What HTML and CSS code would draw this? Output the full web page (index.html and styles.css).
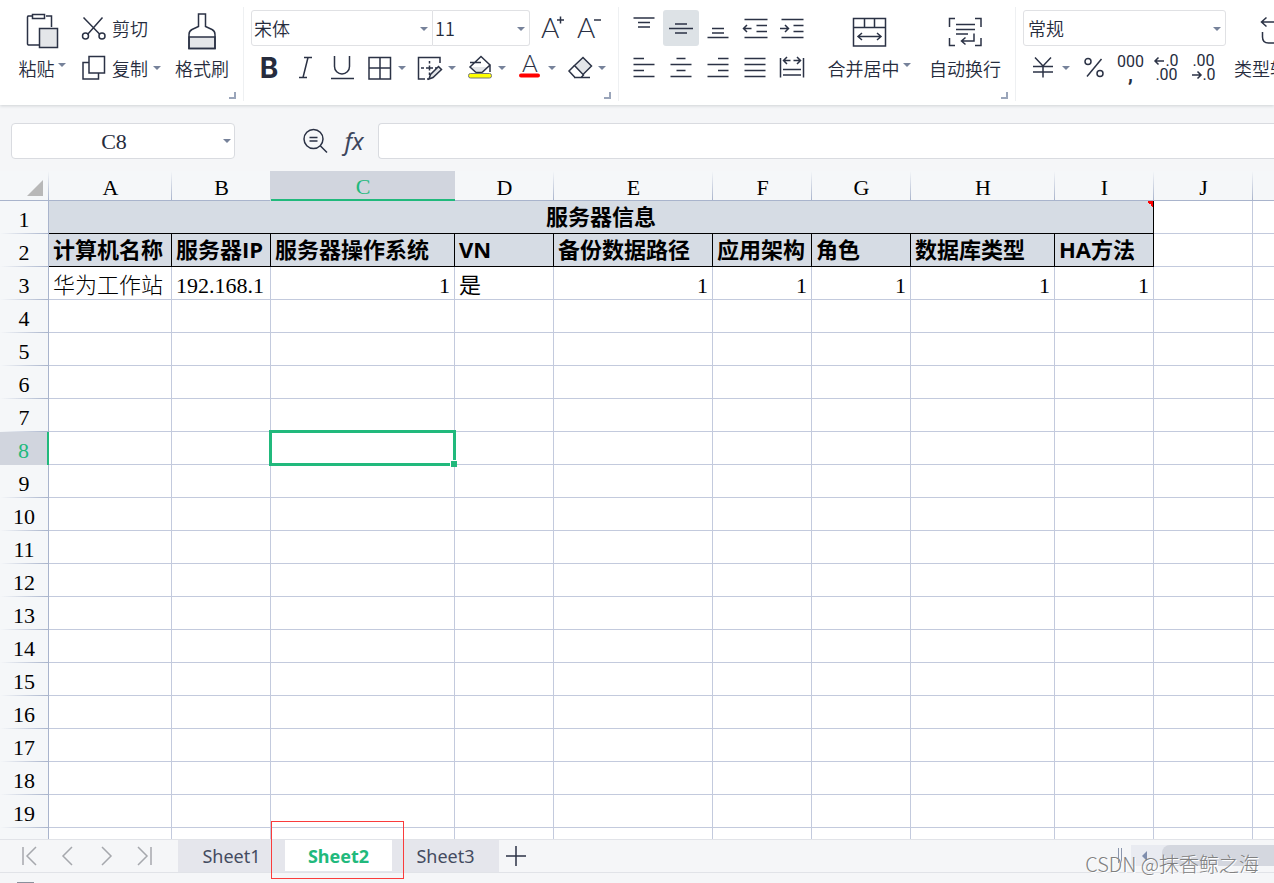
FILE: index.html
```html
<!DOCTYPE html>
<html lang="zh-CN">
<head>
<meta charset="utf-8">
<title>Sheet2</title>
<link rel="stylesheet" href="styles.css">
</head>
<body>
<div class="app">
<header class="ribbon">
  <section class="group clipboard">
    <button class="big paste">
      <svg class="big-icon" width="36" height="38" viewBox="0 0 36 38"><path d="M8 4H4.500a1.500 1.500 0 0 0-1 1V32a1.500 1.500 0 0 0 1 1H15M22 4h5.500V15M8.500 2.500h12v4h-12zM8 4H3.500"/><path class="shade" d="M15.500 16.500h18v19h-18z"/></svg>
      <span class="caption">粘贴<i class="caret raised"></i></span>
    </button>
    <div class="lines">
      <button class="line">
        <svg width="26" height="26" viewBox="0 0 26 26"><path d="M2.500 2.500 19 19.500M21.500 2.500 6.500 19.500"/><circle cx="4.500" cy="21" r="3"/><circle cx="21" cy="21" r="3"/></svg>剪切
      </button>
      <button class="line">
        <svg width="26" height="26" viewBox="0 0 26 26"><path d="M7.500 7.500H2v16.500h15.500v-6M8 1.500h15.500v16.500H8z"/></svg>复制<i class="caret"></i>
      </button>
    </div>
    <button class="big brush">
      <svg class="big-icon" width="32" height="38" viewBox="0 0 32 38"><path class="shade" d="M3 25h26v11.500H3z"/><path d="M12.500 2h7v12.500l6.500 3q3 1.500 3 5v14H3v-14q0-3.500 3-5l6.500-3z"/></svg>
      <span class="caption">格式刷</span>
    </button>
    <i class="launcher"></i>
  </section>

  <section class="group font">
    <div class="row">
      <label class="combo family"><select aria-label="字体"><option>宋体</option></select></label>
      <label class="combo size"><select aria-label="字号"><option>11</option></select></label>
      <button class="tool resize" aria-label="增大字号"><svg width="26" height="28" viewBox="0 0 26 28"><text class="letter" x="1" y="24">A</text><path d="M17 6h7M20.500 2.500v7"/></svg></button>
      <button class="tool" aria-label="减小字号"><svg width="26" height="28" viewBox="0 0 26 28"><text class="letter" x="1" y="24">A</text><path d="M18 6h7"/></svg></button>
    </div>
    <div class="row">
      <button class="tool bold" aria-label="加粗">B</button>
      <button class="tool" aria-label="倾斜"><svg width="26" height="26" viewBox="0 0 26 26"><path d="M12 2.500h8M7 22.500h8M16 2.500 11 22.500"/></svg></button>
      <button class="tool" aria-label="下划线"><svg width="26" height="26" viewBox="0 0 26 26"><path d="M6.500 1v10.500a7.500 7.500 0 0 0 15 0V1M3 23.500h23"/></svg></button>
      <button class="split" aria-label="边框"><svg width="26" height="26" viewBox="0 0 26 26"><path d="M2 2.500h21.500v21.500H2zM13 2v22M2 13h22"/></svg><i class="caret"></i></button>
      <button class="split" aria-label="绘制边框"><svg width="26" height="26" viewBox="0 0 26 26"><path d="M8 24H1.500V2.500h21.500V8M10 24h2"/><path d="M4 13h3m2 0h7m2 0h2M12.500 6v2.500m0 2v5m0 2V20"/><path class="shade" d="m12 24 1.500-4.500L21.500 11.500l3 3-8.500 8z"/></svg><i class="caret"></i></button>
      <button class="split" aria-label="填充颜色"><svg width="26" height="26" viewBox="0 0 26 26"><path class="shade-only" d="M4 12h18l-6 6H9z"/><path d="m9 17.500-6-5.500L14 1.500l9 8.500-8 7.500M3 7.500h11M23 9.500V17M9 17.500h6"/><rect class="yellow" x="1.500" y="18.500" width="23" height="4.500" rx="2"/></svg><i class="caret"></i></button>
      <button class="split" aria-label="字体颜色"><svg width="26" height="26" viewBox="0 0 26 26"><text class="letter small" x="5" y="17">A</text><rect class="red" x="2" y="18.500" width="21" height="4" rx="2"/></svg><i class="caret"></i></button>
      <button class="split" aria-label="清除"><svg width="26" height="26" viewBox="0 0 26 26"><path class="shade" d="m7.500 10.500 8.500-8 8.500 8.500-8.500 8.500z"/><path d="M7.500 10.500 2 16l6 6.500h6l3-3M7 22.500h16"/></svg><i class="caret"></i></button>
    </div>
    <i class="launcher"></i>
  </section>

  <section class="group align">
    <div class="lines">
      <div class="row tight">
        <button class="tool" aria-label="顶端对齐"><svg width="26" height="26" viewBox="0 0 26 26"><path d="M2.500 3h21M7 7.500h12M7 12h12"/></svg></button>
        <button class="tool active" aria-label="垂直居中" aria-pressed="true"><svg width="26" height="26" viewBox="0 0 26 26"><path d="M1 13.500h24M7 9h12M7 18h12"/></svg></button>
        <button class="tool" aria-label="底端对齐"><svg width="26" height="26" viewBox="0 0 26 26"><path d="M7 13.500h12M7 18h12M2.500 22.500h21"/></svg></button>
        <button class="tool" aria-label="减少缩进"><svg width="26" height="26" viewBox="0 0 26 26"><path d="M2.500 4.500h23M14.500 10.500h10.500M14.500 16.500h10.500M2.500 22.500h23M1 13.500h8.500M5 10l-3.500 3.500L5 17"/></svg></button>
        <button class="tool" aria-label="增加缩进"><svg width="26" height="26" viewBox="0 0 26 26"><path d="M2.500 4.500h22M14.500 10.500h10M14.500 16.500h10M2.500 22.500h22M1 13.500h8.500M6 10l3.500 3.500L6 17"/></svg></button>
      </div>
      <div class="row tight">
        <button class="tool" aria-label="左对齐"><svg width="26" height="26" viewBox="0 0 26 26"><path d="M2.500 3.500h10.500M2.500 9.500h21M2.500 15.500h10.500M2.500 21.500h21"/></svg></button>
        <button class="tool" aria-label="水平居中"><svg width="26" height="26" viewBox="0 0 26 26"><path d="M8.500 3.500h9M2.500 9.500h21M8.500 15.500h9M2.500 21.500h21"/></svg></button>
        <button class="tool" aria-label="右对齐"><svg width="26" height="26" viewBox="0 0 26 26"><path d="M13 3.500h10.500M2.500 9.500h21M13 15.500h10.500M2.500 21.500h21"/></svg></button>
        <button class="tool" aria-label="两端对齐"><svg width="26" height="26" viewBox="0 0 26 26"><path d="M2.500 3.500h21M2.500 9.500h21M2.500 15.500h21M2.500 21.500h21"/></svg></button>
        <button class="tool" aria-label="分散对齐"><svg width="26" height="26" viewBox="0 0 26 26"><path d="M1.500 3v19.500M24.500 3v19.500M4 14.500h18M4 20h18M4.500 5.500h7M8 2 4.500 5.500 8 9M14.500 5.500h7M18 2l3.500 3.500L18 9"/></svg></button>
      </div>
    </div>
    <button class="big merge">
      <svg class="big-icon" width="36" height="36" viewBox="0 0 36 36"><path d="M2.500 6.500h32V34h-32zM2.500 15.500h32M13.500 6.500v9M23.500 6.500v9M7 24.500h23M11 21l-4 3.500 4 3.500M26 21l4 3.500-4 3.500"/></svg>
      <span class="caption">合并居中<i class="caret raised"></i></span>
    </button>
    <button class="big wrap">
      <svg class="big-icon" width="36" height="36" viewBox="0 0 36 36"><path d="M8 6.500H2.500V15M28 6.500h6V15M2.500 26v7.500H8M34 26v7.500h-6M9 12.500h19M9 17.500h19M9 22h12M27 21.500V29H14.500M18.500 25.500 14.500 29l4 3.500"/></svg>
      <span class="caption">自动换行</span>
    </button>
    <i class="launcher"></i>
  </section>

  <section class="group number">
    <div class="lines">
      <label class="combo format"><select aria-label="数字格式"><option>常规</option></select></label>
      <div class="row">
        <button class="currency" aria-label="货币"><svg width="26" height="26" viewBox="0 0 26 26"><path d="M5 2.500 13 11l8-8.500M3 11.500h20M3 17h20M13 11v11.500"/></svg><i class="caret"></i></button>
        <button class="tool percent" aria-label="百分比"><svg width="26" height="26" viewBox="0 0 26 26"><path d="M20.500 4 6 21.500"/><circle cx="7" cy="6.500" r="3"/><circle cx="19" cy="18.500" r="3"/></svg></button>
        <button class="tool digits thousands" aria-label="千位分隔"><span>000</span><b>,</b></button>
        <button class="tool digits" aria-label="增加小数位"><span><svg width="11" height="10" viewBox="0 0 11 10"><path d="M1 5h9M4.500 1.500 1 5l3.500 3.500"/></svg>.0</span><span>.00</span></button>
        <button class="tool digits" aria-label="减少小数位"><span>.00</span><span><svg width="11" height="10" viewBox="0 0 11 10"><path d="M1 5h9M6.500 1.500 10 5 6.500 8.500"/></svg>.0</span></button>
      </div>
    </div>
    <button class="big convert">
      <svg class="big-icon" width="36" height="38" viewBox="0 0 36 38"><path d="M14.500 5.500 9.500 10l5 4.500M9.500 10h18q5 0 5 5M10.500 20v5q0 6 6 6h16M29 26.500l4.500 4.500-4.500 4.500"/></svg>
      <span class="caption">类型转换</span>
    </button>
  </section>
</header>

<div class="formula-bar">
  <label class="name-box"><input type="text" value="C8" aria-label="名称框"></label>
  <button class="lookup" aria-label="查找"><svg width="28" height="28" viewBox="0 0 28 28"><circle cx="12.500" cy="12" r="9.500"/><path d="m19.500 19 6.500 6.500M8.500 10.500h8M8.500 14h8"/></svg></button>
  <button class="fx" aria-label="插入函数">fx</button>
  <input class="formula" type="text" aria-label="编辑栏">
</div>

<main class="grid">
<table>
<colgroup><col class="w-num"><col class="w-a"><col class="w-s"><col class="w-c"><col class="w-s"><col class="w-e"><col class="w-s"><col class="w-s"><col class="w-h"><col class="w-s"><col class="w-s"><col class="w-s"></colgroup>
<thead>
<tr><th class="corner"><svg width="16" height="16" viewBox="0 0 16 16"><path d="M16 0v16H0z"/></svg></th><th>A</th><th>B</th><th class="current">C</th><th>D</th><th>E</th><th>F</th><th>G</th><th>H</th><th>I</th><th>J</th><th></th></tr>
</thead>
<tbody>
<tr><th>1</th><td class="title" colspan="9">服务器信息<i class="note"></i></td><td></td><td></td></tr>
<tr class="fields"><th>2</th><td>计算机名称</td><td>服务器IP</td><td>服务器操作系统</td><td>VN</td><td>备份数据路径</td><td>应用架构</td><td>角色</td><td>数据库类型</td><td>HA方法</td><td class="plain"></td><td class="plain"></td></tr>
<tr><th>3</th><td>华为工作站</td><td>192.168.1</td><td class="num">1</td><td class="sans">是</td><td class="num">1</td><td class="num">1</td><td class="num">1</td><td class="num">1</td><td class="num">1</td><td></td><td></td></tr>
<tr><th>4<td><td><td><td><td><td><td><td><td><td><td></tr>
<tr><th>5<td><td><td><td><td><td><td><td><td><td><td></tr>
<tr><th>6<td><td><td><td><td><td><td><td><td><td><td></tr>
<tr><th>7<td><td><td><td><td><td><td><td><td><td><td></tr>
<tr><th class="current">8<td><td><td class="selected"><i class="cursor"></i><td><td><td><td><td><td><td><td></tr>
<tr><th>9<td><td><td><td><td><td><td><td><td><td><td></tr>
<tr><th>10<td><td><td><td><td><td><td><td><td><td><td></tr>
<tr><th>11<td><td><td><td><td><td><td><td><td><td><td></tr>
<tr><th>12<td><td><td><td><td><td><td><td><td><td><td></tr>
<tr><th>13<td><td><td><td><td><td><td><td><td><td><td></tr>
<tr><th>14<td><td><td><td><td><td><td><td><td><td><td></tr>
<tr><th>15<td><td><td><td><td><td><td><td><td><td><td></tr>
<tr><th>16<td><td><td><td><td><td><td><td><td><td><td></tr>
<tr><th>17<td><td><td><td><td><td><td><td><td><td><td></tr>
<tr><th>18<td><td><td><td><td><td><td><td><td><td><td></tr>
<tr><th>19<td><td><td><td><td><td><td><td><td><td><td></tr>
<tr><th><td><td><td><td><td><td><td><td><td><td><td></tr>
</tbody>
</table>
</main>

<footer class="footer">
  <div class="sheet-bar">
    <nav class="sheet-nav">
      <button aria-label="第一张"><svg width="18" height="20" viewBox="0 0 18 20"><path d="M2 1v18M15 1 6 10l9 9"/></svg></button>
      <button aria-label="上一张"><svg width="18" height="20" viewBox="0 0 18 20"><path d="M13 1 4 10l9 9"/></svg></button>
      <button aria-label="下一张"><svg width="18" height="20" viewBox="0 0 18 20"><path d="m5 1 9 9-9 9"/></svg></button>
      <button aria-label="最后一张"><svg width="18" height="20" viewBox="0 0 18 20"><path d="m3 1 9 9-9 9M16 1v18"/></svg></button>
    </nav>
    <button class="tab">Sheet1</button>
    <button class="tab open">Sheet2<i class="mark"></i></button>
    <button class="tab">Sheet3</button>
    <button class="add" aria-label="新建工作表"><svg width="20" height="20" viewBox="0 0 20 20"><path d="M0 10h20M10 0v20"/></svg></button>
    <i class="splitter"></i>
    <div class="scroll"><i class="scroll-arrow"></i><i class="thumb"></i></div>
  </div>
  <div class="status"><i class="status-icon"></i></div>
  <span class="watermark">CSDN @抹香鲸之海</span>
</footer>
</div>
</body>
</html>
```
FILE: styles.css
```css
* { box-sizing: border-box; }
body { margin: 0; overflow: hidden; font: 18px/24px "Noto Sans CJK SC", "Noto Sans", sans-serif; color: #262c3d; background: #f5f6f8; }
button { border: 0; padding: 0; margin: 0; background: none; font: inherit; color: inherit; cursor: pointer; flex: none; }
svg { display: block; flex: none; overflow: visible; fill: none; stroke: #2b3245; stroke-width: 1.5; }
.shade { fill: #e4e6e9; }
.shade-only { fill: #e4e6e9; stroke: none; }
.yellow { fill: #ff0; stroke: #777; stroke-width: 1; }
.red { fill: #f00; stroke: none; }
.letter { font: 300 28px Lato, sans-serif; fill: #2b3245; stroke: none; }
.letter.small { font-size: 24px; }

.app { display: flex; flex-direction: column; height: 100vh; overflow: hidden; }

/* ribbon */
.ribbon { display: flex; flex: none; height: 105px; background: #fff; box-shadow: 0 1px 3px #cfd2d6; font-weight: 350; overflow: hidden; z-index: 1; }
.group { position: relative; display: flex; flex: none; padding-top: 10px; }
.group::after { content: ""; position: absolute; right: 0; top: 7px; bottom: 4px; width: 1px; background: #eef0f2; }
.clipboard { width: 244px; padding-left: 17px; }
.font { width: 375px; padding-left: 7px; flex-direction: column; gap: 4px; }
.align { width: 397px; padding-left: 7px; }
.number { padding-left: 7px; }
.number::after { display: none; }
.lines { display: flex; flex-direction: column; gap: 4px; }
.row { display: flex; height: 36px; }
.tight { gap: 1px; }
.big { display: flex; flex-direction: column; align-items: center; justify-content: space-between; height: 70px; padding-top: 2px; white-space: nowrap; }
.caption { display: flex; align-items: center; gap: 3px; }
.big-icon { margin: 0 auto; }
.paste { width: 50px; }
.brush { width: 58px; margin-left: 14px; }
.clipboard .lines { width: 92px; padding-left: 14px; }
.line { display: flex; align-items: center; height: 36px; gap: 5px; white-space: nowrap; }
.caret { flex: none; width: 0; height: 0; border: 4px solid transparent; border-top-color: #76829a; border-bottom: 0; }
.raised { margin-bottom: 6px; }
.tool { display: flex; align-items: center; justify-content: center; width: 36px; height: 36px; border-radius: 3px; }
.active { background: #dde2e6; }
.split { display: flex; align-items: center; width: 50px; height: 36px; padding-left: 8px; gap: 5px; }
.bold { font: 700 28px/36px Inter, "Noto Sans", sans-serif; }
.resize { margin-left: 5px; }
.launcher { position: absolute; right: 8px; bottom: 6px; width: 7px; height: 7px; border: solid #9aa5ba; border-width: 0 2px 2px 0; }
.combo { position: relative; display: block; height: 36px; border: 1px solid #e0e1e4; border-radius: 3px; }
.combo select { display: block; width: 100%; height: 34px; padding: 0 2px; border: 0; background: none; appearance: none; font: inherit; color: inherit; }
.combo::after, .name-box::after { content: ""; position: absolute; right: 4px; top: 16px; border: 4px solid transparent; border-top-color: #76829a; border-bottom: 0; pointer-events: none; }
.family { width: 182px; border-radius: 3px 0 0 3px; }
.size { width: 97px; border-left: 0; border-radius: 0 3px 3px 0; }
.format { width: 203px; }
.format select { padding: 0 4px; }
.merge { width: 88px; margin-left: 15px; }
.wrap { width: 84px; margin-left: 10px; }
.currency { display: flex; align-items: center; gap: 6px; width: 53px; padding-left: 7px; }
.percent { width: 35px; }
.digits { flex-direction: column; width: 37px; font: 400 16px/14px Roboto, sans-serif; }
.digits span { display: flex; align-items: center; }
.digits.thousands { width: 39px; margin-right: -2px; padding-bottom: 2px; }
.digits b { font-weight: 700; font-size: 20px; line-height: 10px; }
.convert { width: 76px; margin-left: 6px; }

/* formula bar */
.formula-bar { display: flex; flex: none; height: 66px; padding: 18px 0 12px 11px; }
.name-box { position: relative; width: 224px; height: 36px; }
.name-box input { width: 100%; height: 36px; padding: 2px 18px 0 0; text-align: center; font: 22px "Liberation Serif", serif; }
input { border: 1px solid #d9dbe0; border-radius: 4px; background: #fff; color: #262c3d; outline: 0; }
.lookup { margin-left: 66px; }
.fx { width: 50px; height: 36px; font: italic 400 24px/32px "Noto Sans", sans-serif; color: #3e465c; }
.formula { flex: 1; min-width: 0; height: 36px; margin-left: -1px; border-right: 0; border-radius: 4px 0 0 4px; }

/* cells */
.grid { flex: 1; min-height: 0; overflow: hidden; background: #fff; }
table { width: 1352px; table-layout: fixed; border-spacing: 0; font: 22px/26px "Liberation Serif", "Noto Sans CJK SC", serif; font-weight: 300; color: #000; }
.w-num { width: 49px; } .w-a { width: 123px; } .w-s { width: 99px; } .w-c { width: 184px; } .w-e { width: 159px; } .w-h { width: 144px; }
th { padding: 5px 0 0; font-weight: 400; background: #f5f7f9; }
thead th { height: 30px; border-bottom: 1px solid #a9b4cc; background: linear-gradient(#f5f7f9, #a9b4cc) right / 1px 100% no-repeat #f5f7f9; padding-top: 4px; line-height: 24px; }
thead th.current { background: #d1d5de; color: #21b97c; border-bottom: 2px solid #21b97c; box-shadow: -1px 0 #d1d5de; }
.corner svg { margin: 0 6px 0 auto; fill: #b8b8b8; stroke: none; }
tbody th { height: 33px; border-right: 1px solid #a9b4cc; background: linear-gradient(90deg, #f5f7f9, #a9b4cc) bottom / 100% 1px no-repeat #f5f7f9; }
tbody th.current { background: #d1d5de; color: #21b97c; border-right: 2px solid #21b97c; }
td { height: 33px; padding: 5px 4px 0; border: solid #c3cadd; border-width: 0 1px 1px 0; white-space: nowrap; overflow: hidden; }
.num { text-align: right; }
.sans { font-family: "Noto Sans CJK SC", sans-serif; font-weight: 400; padding-top: 0; padding-bottom: 1px; }
.title, .fields td { padding-top: 0; padding-bottom: 2px; font: 700 22px/30px "Open Sans", "Noto Sans CJK SC", sans-serif; background: #d6dce4; border-color: #000; }
.title { position: relative; text-align: center; }
.fields .plain { background: #fff; border-color: #c3cadd; }
.note { position: absolute; right: 0; top: 0; width: 6px; height: 6px; background: linear-gradient(to top right, transparent 50%, #f00 50%); }
.selected { position: relative; overflow: visible; }
.cursor { position: absolute; inset: -2px; border: 3px solid #21b97c; }
.cursor::after { content: ""; position: absolute; right: -4px; bottom: -4px; width: 6px; height: 6px; background: #21b97c; border: solid #fff; border-width: 1px 0 0 1px; }

/* sheet tabs */
.footer { position: relative; flex: none; }
.sheet-bar { display: flex; height: 34px; border: solid #e1e3e8; border-width: 1px 0; background: #f5f6f8; }
.sheet-nav { display: flex; width: 178px; padding-left: 21px; gap: 20px; }
.sheet-nav svg { stroke: #a6a8ad; }
.tab { position: relative; width: 107px; height: 32px; background: #e5e6ec; font: 18px/32px "Noto Sans", sans-serif; color: #444b60; }
.open { background: #fff; border-bottom: 1px solid #e5e6ec; font-weight: 700; color: #21b97c; }
.mark { position: absolute; left: -14px; right: -12px; top: -19px; bottom: -8px; border: 1px solid #fa3c3c; z-index: 2; }
.add { padding: 0 7px; }
.splitter { width: 4px; height: 15px; margin: 8px 9px 0 auto; border: solid #8b96ad; border-width: 0 1px; }
.scroll { display: flex; align-items: center; width: 143px; height: 21px; margin-top: 5px; padding-left: 11px; gap: 15px; background: #e9ebf1; }
.scroll-arrow { border: 5px solid transparent; border-right-color: #7f8ead; border-left: 0; }
.thumb { flex: 1; height: 21px; border-radius: 8px 0 0 8px; background: #d4d7df; }
.status { height: 10px; padding: 9px 0 0 17px; }
.status-icon { display: block; width: 17px; height: 1px; background: #8a909c; }
.watermark { position: absolute; right: 15px; bottom: 7px; font: 300 20px/24px "Noto Sans CJK SC", sans-serif; color: #808080; text-shadow: 1px 1px 0 #fff; }
```
